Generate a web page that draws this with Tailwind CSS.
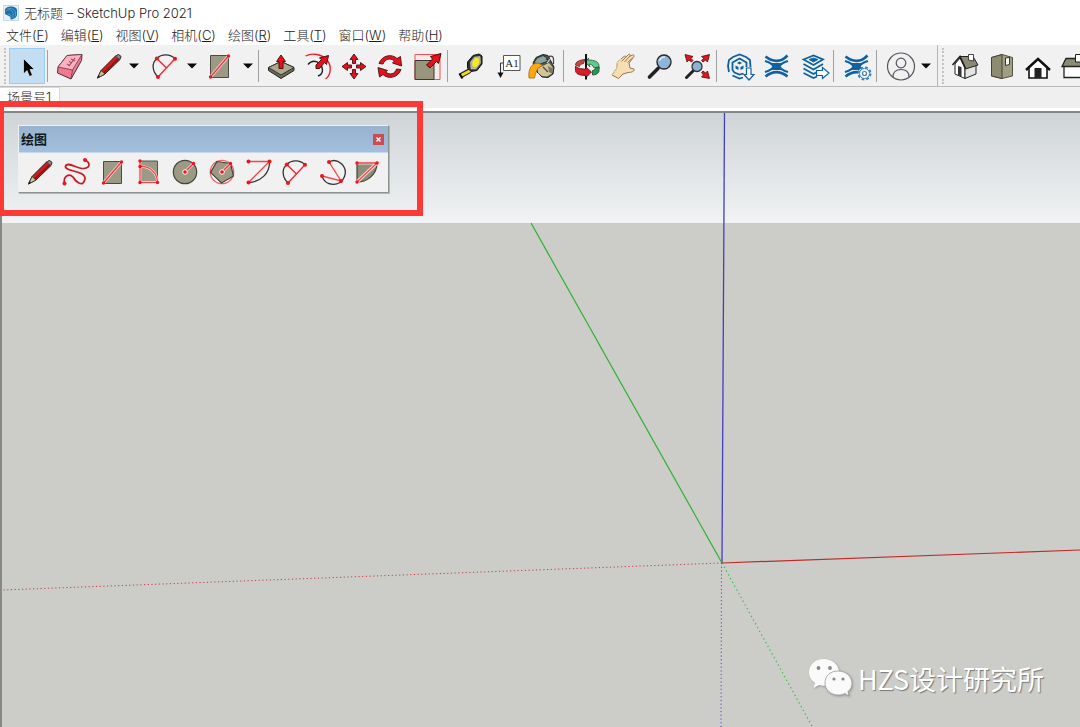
<!DOCTYPE html>
<html lang="zh-CN">
<head>
<meta charset="utf-8">
<title>无标题 - SketchUp Pro 2021</title>
<script src="https://cdn.jsdelivr.net/npm/@tailwindcss/browser@4"></script>
</head>
<body class="flex h-screen flex-col overflow-hidden bg-white font-['Inter','Noto_Sans_CJK_SC',sans-serif] text-[#1c1c1c]">
<svg class="hidden" aria-hidden="true">
  <symbol id="pencil" viewBox="0 0 32 32">
    <path d="M4.500 28L8 20.500 22.500 6 25.500 4.500 28 6.500 27 9.500 12 24Z" fill="#cf1c1c" stroke="#2b2020"/>
    <path d="M4.500 28L8 20.500 12 24Z" fill="#cdc598" stroke="#2b2b20" stroke-width=".8"/>
    <path d="M11 22.800L25.500 8.800" stroke="#8a1010" stroke-width="1.300"/><path d="M22.500 6L26.500 9.500 28 6.500 25.500 4.500Z" fill="#8f8080" stroke="#444" stroke-width=".8"/><path d="M4 28.700L7 26.500 5.500 25Z" fill="#222"/>
  </symbol>
  <symbol id="arc2" viewBox="0 0 32 32">
    <path d="M10 27C4 21 3.500 13 8.800 8.500 14 3.500 22 4 27 8.800" fill="none" stroke="#333" stroke-width="1.300"/>
    <path d="M10 27L27 8.800M8.800 8.500L18.500 18" stroke="#f5222d" stroke-width="1.300"/>
    <g fill="#f5101c"><circle cx="8.800" cy="8.500" r="2"/><circle cx="27" cy="8.800" r="2"/><circle cx="10" cy="27" r="2"/></g>
  </symbol>
  <symbol id="rect" viewBox="0 0 32 32">
    <path d="M6.500 5.500H24.500V27.500H6.500Z" fill="#9c9a84" stroke="#4b4b42"/>
    <path d="M6.500 27L24.500 6" stroke="#f4dcd8" stroke-width="3"/><path d="M6.500 27L24.500 6" stroke="#f5323b" stroke-width="1.400"/>
    <g fill="#f5101c"><circle cx="6.500" cy="27" r="1.700"/><circle cx="24.500" cy="6" r="1.700"/></g>
  </symbol>
  <symbol id="waves" viewBox="0 0 32 32">
    <g fill="none" stroke="#0f619f">
      <path d="M4.500 6.500C9 10 11 10.800 15.500 10.800S22 10 26.500 5.500" stroke-width="2.700"/>
      <path d="M4 11C9 12.500 12 15 12.500 16.500 12 18 9 20.500 4 22" stroke-width="2.300"/>
      <path d="M27 11C22 12.500 19 15 18.500 16.500 19 18 22 20.500 27 22" stroke-width="2.300"/>
      <path d="M4.500 26.500C9 23 11 22.200 15.500 22.200S22 23 26.500 26.500" stroke-width="2.700"/>
    </g>
    <path d="M10.500 13H20.500L18.500 16.500 20.500 20H10.500L12.500 16.500Z" fill="#0f619f"/>
  </symbol>
  <symbol id="caret" viewBox="0 0 10 6"><path d="M0 0.500H10L5 5.500Z" fill="#0a0a0a"/></symbol>
</svg>

<header class="flex h-[25px] shrink-0 items-center gap-[5px] pl-[3px]">
  <svg class="size-4" viewBox="0 0 16 16" aria-hidden="true"><path d="M.5.500H15.500V15.500H.5Z" fill="#e7f0f7" stroke="#c5d9e8"/><path d="M8 1.500C11 1.500 14 3 14 5V10C14 12 11 14.500 7.500 14.500V12L2 9V5C2 3 5 1.500 8 1.500Z" fill="#1c70ae"/><path d="M3 6C6 3.500 10 5 10 8.500V13M5 9.500C7 9 8 10 8 12M4.500 4C8 2.500 12.500 4.500 12.500 8V11.500" fill="none" stroke="#75a9d0" stroke-width=".7"/></svg>
  <h1 class="text-[13px] leading-5 font-light">无标题 – SketchUp Pro 2021</h1>
</header>

<nav class="flex h-5 shrink-0 items-center gap-3 pl-[6px] text-[13px] leading-5 font-light" aria-label="菜单">
  <button class="whitespace-nowrap">文件(<u>F</u>)</button>
  <button class="whitespace-nowrap">编辑(<u>E</u>)</button>
  <button class="whitespace-nowrap">视图(<u>V</u>)</button>
  <button class="whitespace-nowrap">相机(<u>C</u>)</button>
  <button class="whitespace-nowrap">绘图(<u>R</u>)</button>
  <button class="whitespace-nowrap">工具(<u>T</u>)</button>
  <button class="whitespace-nowrap">窗口(<u>W</u>)</button>
  <button class="whitespace-nowrap">帮助(<u>H</u>)</button>
</nav>

<div class="flex h-[42px] shrink-0 items-center overflow-hidden border-b border-[#b9b9b9] bg-[#f1f1f1] pl-1 *:shrink-0" role="toolbar" aria-label="使用入门">
  <span class="mr-[3px] h-9 border-l-2 border-dotted border-[#c4c4c4]"></span>
  <button aria-label="选择" class="mr-[2px] flex h-9 w-9 items-center justify-center border border-[#9bcbf0] bg-[#c3ddf3]"><svg class="size-8" viewBox="0 0 32 32"><path d="M12.500 8.500V24L16 20.500 18.500 26.500 21.500 25.200 19 19.500H23.500Z" fill="#050505" stroke="#fff" stroke-width=".6"/></svg></button>
  <span class="h-8 w-px bg-[#a0a0a0]"></span>
  <button aria-label="擦除" class="flex w-[42px] justify-center"><svg class="size-8" viewBox="0 0 32 32"><path d="M5 17L14 5.500 29 4.500 28.500 10.500 18 29 4.500 23Z" fill="#f5788f" stroke="#4a3036"/><path d="M5 17L14 5.500 29 4.500 19.500 20Z" fill="#ffb0c0" stroke="#5a3a42" stroke-width=".8"/><path d="M19.500 20L18 29" stroke="#6a3a44" stroke-width=".8"/><path d="M16 16L22 8M14 14L17 16M16 11.500L19 13M18 9L22 11" stroke="#a24a62" stroke-width="1.200"/></svg></button>
  <button aria-label="直线" class="flex w-[38px] justify-center"><svg class="size-8"><use href="#pencil"/></svg></button>
  <button aria-label="直线选项" class="flex w-3 justify-center"><svg class="h-[6px] w-[10px]"><use href="#caret"/></svg></button>
  <button aria-label="圆弧" class="flex w-12 justify-center"><svg class="size-8"><use href="#arc2"/></svg></button>
  <button aria-label="圆弧选项" class="flex w-2 justify-center"><svg class="h-[6px] w-[10px] shrink-0"><use href="#caret"/></svg></button>
  <button aria-label="矩形" class="flex w-12 justify-center"><svg class="size-8"><use href="#rect"/></svg></button>
  <button aria-label="矩形选项" class="flex w-2 justify-center"><svg class="h-[6px] w-[10px] shrink-0"><use href="#caret"/></svg></button>
  <span class="mr-[3px] ml-[6px] h-8 w-px bg-[#a0a0a0]"></span>

  <button aria-label="推/拉" class="flex w-[37px] justify-center"><svg class="size-8" viewBox="0 0 32 32"><path d="M3.500 17.500L16 11.500 29 17.500V20.500L16 28.500 3.500 20.500Z" fill="#6d6b55" stroke="#22221c"/><path d="M3.500 17.500L16 11.500 29 17.500 16 25Z" fill="#aaa88d" stroke="#33332b"/><path d="M16 5L20.500 11.500H18V18.500H14V11.500H11.500Z" fill="#e8101c" stroke="#511"/></svg></button>
  <button aria-label="偏移" class="flex w-[37px] justify-center"><svg class="size-8" viewBox="0 0 32 32"><path d="M3.500 6C10 2.500 20 4 25 10 30 16 29 25 23.500 29" fill="none" stroke="#f01c28" stroke-width="1.400"/><path d="M6 14.500C11 8 20 12 20.500 20 20.500 23 19 25 16 26" fill="none" stroke="#222" stroke-width="1.400"/><path d="M14 15L19.500 9.500 17.500 8 26.500 5.500 24.500 14.500 22.500 12.500 17.500 18.500H14Z" fill="#e8101c" stroke="#411"/></svg></button>
  <button aria-label="移动" class="flex w-9 justify-center"><svg class="size-8" viewBox="0 0 32 32"><g fill="#e8101c" stroke="#411" stroke-width=".9"><path d="M16 4L20 9.500H17.500V13.500H14.500V9.500H12Z"/><path d="M28 16.500L22.500 20.500V18H18.500V15H22.500V12.500Z"/><path d="M16 29L12 23.500H14.500V19.500H17.500V23.500H20Z"/><path d="M4 16.500L9.500 12.500V15H13.500V18H9.500V20.500Z"/></g></svg></button>
  <button aria-label="旋转" class="flex w-9 justify-center"><svg class="size-8" viewBox="0 0 32 32"><g fill="#e8101c" stroke="#411" stroke-width=".9"><path d="M5 13.500C8 5 18 3.500 23 8.500L26.500 6.500 27.500 16 18.500 13 20.500 11C16 7.500 11 9 9 14Z"/><path d="M27 19.500C24 28 14 29.500 9 24.500L5.500 27 4 17.500 13.500 20.500 11.500 22C16 25.500 21 24 22.500 19Z"/></g></svg></button>
  <button aria-label="缩放" class="flex w-[39px] justify-center"><svg class="size-8" viewBox="0 0 32 32"><path d="M3 4.500H28V29.500H3Z" fill="#f8e9e9" stroke="#ee5058"/><path d="M3 10.500H22V29.500H3Z" fill="#98967c" stroke="#38382f"/><path d="M14.500 15L20.500 9 18.500 6.500 29 3.500 26.500 13.500 24.500 11.500 18 18Z" fill="#e8101c" stroke="#411"/></svg></button>
  <span class="mr-[5px] h-8 w-px bg-[#a0a0a0]"></span>

  <button aria-label="卷尺" class="flex w-9 justify-center"><svg class="size-8" viewBox="0 0 32 32"><path d="M5 26L15 20.500" stroke="#222" stroke-width="5"/><path d="M6 25.500L15.500 20.500" stroke="#f1dd16" stroke-width="3"/><path d="M4.500 23.500L7.500 28.500" stroke="#111" stroke-width="2"/><path d="M12.500 12L18 5.500 24 4 27 6V14L22 20.500 16 21.500 12.500 18Z" fill="#333" stroke="#111"/><path d="M15.500 12L19.500 7 25 6.500 25.500 13 21 19 16 19Z" fill="#aaa" stroke="#ddd" stroke-width=".5"/><ellipse cx="20.700" cy="12.500" rx="3.200" ry="5" transform="rotate(24 20.700 12.500)" fill="#f7ea19"/></svg></button>
  <button aria-label="文字" class="flex w-9 justify-center"><svg class="size-8" viewBox="0 0 32 32"><path d="M12.500 5.500H29V20.500H12.500Z" fill="#fff" stroke="#555"/><path d="M12 13H9.500V24" fill="none" stroke="#333"/><path d="M6.500 22.500H12.500L9.500 28Z" fill="#111"/><text x="21" y="16.500" text-anchor="middle" font-family="Liberation Serif" font-size="11" fill="#222">A1</text></svg></button>
  <button aria-label="材质" class="flex w-9 justify-center"><svg class="size-8" viewBox="0 0 32 32"><path d="M6 13L9 7.500 16 4.500 21 5.500 27 17 26 24 21 27.500 15 27 10 22Z" fill="#55544a" stroke="#222"/><path d="M11 18L22 13 26 18 25 23.500 20 26.500 15 26 11 23Z" fill="#cfc599"/><path d="M21 16L26 18.500 25 23.500 22 22Z" fill="#7d7860"/><path d="M7 12.500L10 8 16 5.500 20 8 21 11 12 14.500Z" fill="#86a6a5" stroke="#333"/><path d="M2 28C1 20 4 13 11 13L16 15.500C10 17 9 22 7.500 28Z" fill="#fca812" stroke="#a56a08" stroke-width=".8"/><path d="M19 10C22 5 26 5 26.500 9V14M16 17L21 22" fill="none" stroke="#444" stroke-width="1.200"/><path d="M20 13L24 8" stroke="#ddd" stroke-width="1.200"/></svg></button>
  <span class="mr-[3px] ml-[2px] h-8 w-px bg-[#a0a0a0]"></span>

  <button aria-label="环绕观察" class="flex w-[37px] justify-center"><svg class="size-8" viewBox="0 0 32 32"><path d="M5.500 15C5.500 12 9 10 15 9.500L13.500 13.500C11 14 10 14.500 9.500 16.500Z" fill="#c74742" stroke="#522" stroke-width=".8"/><path d="M18 10C25 10 29 12 29 16V19L23.500 17.500C23 15 21.500 14.500 19 14L20 17 15.500 12.500 18.500 8Z" fill="#63ca8d" stroke="#265a39" stroke-width=".8"/><path d="M29 17V21.500C28 24 25 25 22.500 25V20.500C24.500 20 25.500 19 25.500 17.500Z" fill="#279852" stroke="#1b4a2d" stroke-width=".8"/><path d="M16 4V19" stroke="#111" stroke-width="2"/><path d="M5.500 16C7 18 10 19 16 19V17L21.500 22 16 27.500V25.500C9 25.500 5.500 23.500 5.500 20.500Z" fill="#d91b2b" stroke="#511" stroke-width=".8"/><path d="M16 26V29.500" stroke="#111" stroke-width="2"/></svg></button>
  <button aria-label="平移" class="flex w-[37px] justify-center"><svg class="size-8" viewBox="0 0 32 32"><path d="M5 25L9.500 18.500 10.500 12 17 6.500C18.500 5.500 19.500 6.500 18.500 7.500L21.500 4.500C23 3.500 24 5 22.500 6.500L25.500 5C27.500 4.500 27.500 7 26 8L22 13 23 18 27 19C28 21 25 22.500 21 22.500L16 24 11.500 28.500Z" fill="#f6dfb4" stroke="#98764f"/><path d="M14.500 11.500L18.500 7.500M17.500 12L22.500 6.500M20.500 12.500L25.500 8" stroke="#8a6c48" stroke-width=".9"/><path d="M5 25L9.500 18.500 10.500 12 14 9" fill="none" stroke="#e8cf9a"/></svg></button>
  <button aria-label="缩放视图" class="flex w-[37px] justify-center"><svg class="size-8" viewBox="0 0 32 32"><path d="M5.500 27L14 18.500" stroke="#222" stroke-width="3.600" stroke-linecap="round"/><circle cx="20" cy="12" r="7" fill="#8eb4da" stroke="#2b2b2b" stroke-width="1.400"/><path d="M15.500 11C16 8 18.500 7 21 7" fill="none" stroke="#dceaf8" stroke-width="1.500"/></svg></button>
  <button aria-label="充满视窗" class="flex w-[37px] justify-center"><svg class="size-8" viewBox="0 0 32 32"><path d="M5.500 27.500L12.500 20.500" stroke="#222" stroke-width="3" stroke-linecap="round"/><circle cx="16" cy="16.500" r="5" fill="#8fb2d6" stroke="#333" stroke-width="1.300"/><g fill="#e8101c" stroke="#411" stroke-width=".8"><path d="M4 4.500L12 6.500 9.800 8.300 12 10.500 10.500 12 8 10 6 12Z"/><path d="M28.500 4.500L26.500 12 24.500 10 22 12 20.500 10.500 22.800 8.300 20.500 6.500Z"/><path d="M28.500 28.500L20.500 27 22.500 25 20.500 22.500 22 21 24.500 23 26.500 21Z"/></g></svg></button>
  <span class="mr-1 ml-px h-8 w-px bg-[#a0a0a0]"></span>

  <button aria-label="3D Warehouse" class="flex w-[37px] justify-center"><svg class="size-8" viewBox="0 0 32 32"><g fill="none" stroke="#0f619f" stroke-width="1.800"><path d="M19 27.500L15.500 28.500 8.500 25.500M5 22L4 16 5 10 9 7 15.500 4.500 22 7 26 10 26.500 17"/><path d="M19.500 23.500L15.500 24.500 10.500 22.500 8.500 20V12.500L15.500 8.500 22.500 12.500V17"/></g><g fill="#0f619f"><path d="M15.500 11.500L18 13 15.500 14.500 13 13ZM11.500 15.500L14.500 17V20L11.500 18.500ZM19.500 15.500L16.500 17V20L19.500 18.500Z"/></g><path d="M22.500 18H27V24.500H30L25 30 20 24.500H22.500Z" fill="#fff" stroke="#0f619f" stroke-width="1.200"/></svg></button>
  <button aria-label="Extension Warehouse" class="flex w-[37px] justify-center"><svg class="size-8"><use href="#waves"/></svg></button>
  <button aria-label="LayOut" class="flex w-[37px] justify-center"><svg class="size-8" viewBox="0 0 32 32"><g fill="none" stroke="#0f619f" stroke-width="1.800"><path d="M5.500 9.500L15.500 5.500 25 9.500 15.500 15Z"/><path d="M11 9.500L15.500 8 20 9.500 15.500 12Z" fill="#0f619f" stroke-width=".8"/><path d="M5.500 14L15.500 19.500 25 14M5.500 18.500L15.500 24 18 22.500M5.500 23L15.500 28 19 26.500"/></g><path d="M18.500 20.500H24.500V17.500L31 23 24.500 28.500V25.500H18.500Z" fill="#fff" stroke="#0f619f" stroke-width="1.200"/></svg></button>
  <span class="mr-1 ml-px h-8 w-px bg-[#a0a0a0]"></span>
  <button aria-label="扩展程序管理器" class="flex w-[38px] justify-center"><svg class="size-8" viewBox="0 0 32 32"><use href="#waves"/><circle cx="23.500" cy="23.500" r="6" fill="#f5f8fa" stroke="#3b7fb4" stroke-width="2" stroke-dasharray="2.700 2"/><circle cx="23.500" cy="23.500" r="5" fill="#f5f8fa" stroke="#3b7fb4"/><circle cx="23.500" cy="23.500" r="2" fill="#fff" stroke="#3b7fb4" stroke-width="1.200"/></svg></button>
  <span class="mr-[5px] h-8 w-px bg-[#a0a0a0]"></span>
  <button aria-label="帐户" class="flex w-[37px] justify-center"><svg class="size-8" viewBox="0 0 32 32" fill="none" stroke="#55555f" stroke-width="1.200"><circle cx="16" cy="16.500" r="13.500"/><circle cx="16" cy="13" r="4.800"/><path d="M8 27C8 22 11 19.500 16 19.500S24 22 24 27"/></svg></button>
  <button aria-label="帐户选项" class="flex w-[14px] justify-center"><svg class="h-[6px] w-[10px]"><use href="#caret"/></svg></button>
  <span class="mr-1 ml-1 h-full w-px bg-[#b5b5b5]"></span>
  <span class="mr-1 h-9 border-l-2 border-dotted border-[#c4c4c4]"></span>
  <button aria-label="等轴视图" class="flex w-9 justify-center"><svg class="size-8" viewBox="0 0 32 32"><path d="M5 14L10 8 15 18V28.500L5 24Z" fill="#fff" stroke="#222"/><path d="M15 18L26 15V24L15 28.500Z" fill="#e4e4e4" stroke="#222"/><path d="M10 6.500L23 6.500 28 15 15.500 19Z" fill="#8c8a72" stroke="#222"/><path d="M2.500 15L10 6.500 15.500 18.500" fill="none" stroke="#222" stroke-width="1.600"/><path d="M8 16L11.500 17V26.500L8 25Z" fill="#333"/><path d="M18.500 4.500H23.500V11L18.500 10Z" fill="#fff" stroke="#444"/></svg></button>
  <button aria-label="俯视图" class="flex w-9 justify-center"><svg class="size-8" viewBox="0 0 32 32"><path d="M5.500 7.500L16 4.500 26.500 7.500V26L16 28.500 5.500 26Z" fill="#a09e83" stroke="#55543f"/><path d="M5.500 7.500L16 4.500V28.500L5.500 26Z" fill="#8d8b71" stroke="#45442f"/><path d="M19.500 8L23.500 7.500V14.500L19.500 15.500Z" fill="#fff" stroke="#333"/></svg></button>
  <button aria-label="前视图" class="flex w-9 justify-center"><svg class="size-8" viewBox="0 0 32 32"><path d="M7 17L16 9 25 17V28H7Z" fill="#fff" stroke="#111" stroke-width="1.600"/><path d="M4 20L16 9 28 20" fill="none" stroke="#111" stroke-width="2.400"/><path d="M12.500 18H19.500V28H12.500Z" fill="#222"/></svg></button>
  <button aria-label="右视图" class="flex w-9 justify-center"><svg class="size-8" viewBox="0 0 32 32"><path d="M6 16H28V27.500H6Z" fill="#fff" stroke="#222" stroke-width="1.300"/><path d="M4 16.500L8 8.500H28V16.500Z" fill="#8c8a72" stroke="#222" stroke-width="1.300"/><path d="M17.500 4.500H23.500V12H17.500Z" fill="#fff" stroke="#222"/></svg></button>
</div>

<div class="flex h-[21px] shrink-0 items-end bg-[#efefef]" role="tablist" aria-label="场景">
  <button role="tab" aria-selected="true" class="flex h-[21px] w-[60px] items-start border-t border-r border-[#dadada] bg-white pl-[7px] text-[13px] leading-[18px] font-light whitespace-nowrap">场景号1</button>
</div>

<main class="relative mt-[3px] flex-1 overflow-hidden border-t-2 border-l-2 border-[#858887] bg-[#cccdc8]">
  <div class="h-[110px] bg-linear-to-b from-[#cfd4d7] to-[#f1f3f4]"></div>
  <svg class="absolute top-0 left-0 h-[615px] w-[1078px] overflow-visible" viewBox="2 113 1078 615" fill="none" aria-label="坐标轴">
    <path d="M724.500 113L722 563" stroke="#4140bd" stroke-width="1.300"/>
    <path d="M531 223L722 563" stroke="#2fb135" stroke-width="1.200"/>
    <path d="M722 563L1080 550" stroke="#c02a2a" stroke-width="1.200"/>
    <path d="M722 563L2 590" stroke="#c43c3c" stroke-dasharray="1.200 2.500"/>
    <path d="M721.500 563L721 728" stroke="#4a4ac0" stroke-dasharray="1.200 2.500"/>
    <path d="M722 563L813 728" stroke="#3db843" stroke-width="1.200" stroke-dasharray="1.300 3"/>
  </svg>

  <section class="absolute top-3 left-4 w-[371px] border border-t-[#eef0f2] border-r-[#909394] border-b-[#909394] border-l-[#eef0f2] bg-[#f1f1f1] shadow-[1px_1px_0_#b4b7b9]" aria-label="绘图工具栏">
    <div class="flex h-[27px] items-center justify-between border-b border-[#c7d9ea] bg-linear-to-b from-[#98b3d0] to-[#a3bfdb] pr-1 pl-[2px]">
      <h2 class="text-[13px] leading-5 font-bold text-[#0d1a24]">绘图</h2>
      <button aria-label="关闭" class="flex size-[11px] items-center justify-center bg-[#c84e50]"><svg class="size-[5px]" viewBox="0 0 5 5"><path d="M.5.500L4.500 4.500M4.500.500L.5 4.500" stroke="#fff" stroke-width="1.300"/></svg></button>
    </div>
    <div class="grid grid-cols-10 px-[3px] pt-[3px] pb-1 *:flex *:justify-center">
      <button aria-label="直线"><svg class="size-8"><use href="#pencil"/></svg></button>
      <button aria-label="手绘线"><svg class="size-8" viewBox="0 0 32 32"><path d="M25 4C31 7 30 12 24 12.500 17 13 8 5 5.500 10 4 16 26 14 25 23 23 32 16 26 13 21 9 17 3 20 4.500 27.500" fill="none" stroke="#c91820" stroke-width="1.700"/><g fill="#f5101c"><circle cx="25" cy="4" r="2"/><circle cx="4.500" cy="27.500" r="2"/></g></svg></button>
      <button aria-label="矩形"><svg class="size-8"><use href="#rect"/></svg></button>
      <button aria-label="旋转长方形"><svg class="size-8" viewBox="0 0 32 32"><path d="M7 5H24.500V26.500H7Z" fill="#9c9a84" stroke="#55554a"/><path d="M7 5V26.500H24.500M7 10.500C17 10 24.500 17 24.500 26.500" fill="none" stroke="#f4dcd8" stroke-width="2.600"/><path d="M7 5V26.500H24.500M7 10.500C17 10 24.500 17 24.500 26.500" fill="none" stroke="#f5434b" stroke-width="1.200"/><g fill="#f5101c"><circle cx="7" cy="5" r="1.700"/><circle cx="7" cy="10.500" r="1.700"/><circle cx="7" cy="26.500" r="1.700"/><circle cx="24.500" cy="26.500" r="1.700"/></g></svg></button>
      <button aria-label="圆"><svg class="size-8" viewBox="0 0 32 32"><circle cx="16" cy="16" r="11.700" fill="#9c9a84" stroke="#44443a" stroke-width="1.200"/><path d="M16 16L24.500 7.500" stroke="#f4dcd8" stroke-width="3"/><path d="M16 16L24.500 7.500" stroke="#f5323b" stroke-width="1.400"/><circle cx="16" cy="16" r="2.300" fill="#f5101c" stroke="#fff"/><circle cx="24.500" cy="7.500" r="1.700" fill="#f5101c"/></svg></button>
      <button aria-label="多边形"><svg class="size-8" viewBox="0 0 32 32"><circle cx="16" cy="16" r="11.700" fill="#fff" stroke="#f26269" stroke-width="1.300"/><path d="M11 5.500L24.500 7.500 27.500 20 15.500 27 4.500 16.500Z" fill="#9c9a84" stroke="#44443a" stroke-width="1.200"/><path d="M16 16L24.500 7.500" stroke="#f4dcd8" stroke-width="3"/><path d="M16 16L24.500 7.500" stroke="#f5323b" stroke-width="1.400"/><circle cx="16" cy="16" r="2.300" fill="#f5101c" stroke="#fff"/><circle cx="24.500" cy="7.500" r="1.700" fill="#f5101c"/></svg></button>
      <button aria-label="圆弧"><svg class="size-8" viewBox="0 0 32 32"><path d="M27.500 5.500C28 17 19 26 6.500 26.500" fill="none" stroke="#333" stroke-width="1.300"/><path d="M6.500 5.500H27.500L6.500 26.500" fill="none" stroke="#f5434b" stroke-width="1.300"/><g fill="#f5101c"><circle cx="6.500" cy="5.500" r="2"/><circle cx="27.500" cy="5.500" r="2"/><circle cx="6.500" cy="26.500" r="2"/></g></svg></button>
      <button aria-label="两点圆弧"><svg class="size-8"><use href="#arc2"/></svg></button>
      <button aria-label="三点圆弧"><svg class="size-8" viewBox="0 0 32 32"><path d="M14 6C23 1 33 11 29.500 20.500 26 31 10 31 7 20" fill="none" stroke="#333" stroke-width="1.300"/><path d="M14 6L26 25 7 20" fill="none" stroke="#f5434b" stroke-width="1.300"/><g fill="#f5101c"><circle cx="14" cy="6" r="2"/><circle cx="26" cy="25" r="2"/><circle cx="7" cy="20" r="2"/></g></svg></button>
      <button aria-label="扇形"><svg class="size-8" viewBox="0 0 32 32"><path d="M6 7H26C26 18 17 26 6 26Z" fill="#8f8d77" stroke="#44443a" stroke-width="1.200"/><path d="M6 7H26L6 26" fill="none" stroke="#f4dcd8" stroke-width="3.200"/><path d="M6 7H26L6 26" fill="none" stroke="#f5434b" stroke-width="1.300"/><g fill="#f5101c"><circle cx="6" cy="7" r="1.700"/><circle cx="26" cy="7" r="1.700"/><circle cx="6" cy="26" r="1.700"/></g></svg></button>
    </div>
  </section>

  <div class="absolute right-9 bottom-7 flex items-center gap-[6px] text-white">
    <svg class="h-10 w-11 drop-shadow-[1px_1px_1px_#999]" viewBox="0 0 44 40" aria-hidden="true"><path d="M16 0C7 0 1 6 1 13.500 1 18 3 21 7 24L5.500 29 11 26C14 27 18 27 21 26 29 24 32 19 31 12 30 5 24 0 16 0Z" fill="#fafafa"/><path d="M30 12C22 12 17 17 17 24 17 31 23 36 30 36 33 36 35 35.500 37 34.500L41 37 40 32.500C43 30 44 27 44 24 43.500 17 38 12 30 12Z" fill="#fafafa" stroke="#999" stroke-width=".8"/><g fill="#888"><circle cx="10.500" cy="9" r="1.900"/><circle cx="22" cy="9" r="1.900"/><circle cx="26" cy="20" r="1.600"/><circle cx="35" cy="20" r="1.600"/></g></svg>
    <p class="font-['Noto_Sans_CJK_SC',sans-serif] text-[27px] leading-10 font-normal whitespace-nowrap text-shadow-[1px_1px_1px_#777]">HZS设计研究所</p>
  </div>
</main>

<div class="pointer-events-none absolute top-[101px] -left-[2px] h-[115px] w-[425px] border-6 border-[#fd3938]"></div>
</body>
</html>
